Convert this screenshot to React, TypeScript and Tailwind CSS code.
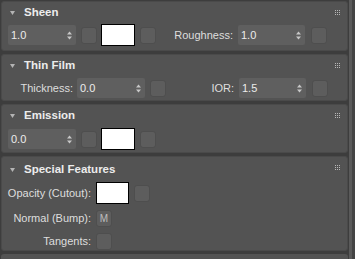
const font = { fontFamily: '"Liberation Sans", Arial, sans-serif' };

function Grip() {
  return (
    <svg width="7" height="7" viewBox="0 0 7 7" className="absolute right-[6px] top-[7px]">
      {[0, 1, 2].map((r) =>
        [0, 1, 2].map((c) => (
          <rect key={`${r}-${c}`} x={c * 2 + 1} y={r * 2 + 1} width="1" height="1" fill="#b8b8b8" />
        ))
      )}
    </svg>
  );
}

function Header({ title, tall }: { title: string; tall?: boolean }) {
  return (
    <div className={`relative flex items-center ${tall ? "h-[24px] pt-[2px]" : "h-[22px]"}`}>
      <svg width="5" height="4" viewBox="0 0 5 4" className="ml-[8px] mr-[9px]">
        <path d="M0 0 H5 L2.5 4 Z" fill="#b4b4b4" />
      </svg>
      <span className="text-[11.5px] font-bold text-[#ececec]">{title}</span>
      <Grip />
    </div>
  );
}

function Spinner({ value, w = "w-[68px]" }: { value: string; w?: string }) {
  return (
    <div className={`flex h-[20px] ${w} items-center justify-between rounded-[2px] bg-[#5f5f5f] pl-[3px] pr-[4px]`}>
      <span className="text-[11px] text-[#ececec]">{value}</span>
      <svg width="5" height="9" viewBox="0 0 5 9">
        <path d="M0 3.5 L2.5 0.5 L5 3.5 Z" fill="#c8c8c8" />
        <path d="M0 5.5 L2.5 8.5 L5 5.5 Z" fill="#c8c8c8" />
      </svg>
    </div>
  );
}

function Square({ children }: { children?: React.ReactNode }) {
  return (
    <div className="flex h-[17px] w-[16px] items-center justify-center rounded-[3px] border border-[#4e4e4e] bg-[#5d5d5d] text-[10px] text-[#bdbdbd]">
      {children}
    </div>
  );
}

function Swatch({ w = "w-[34px]" }: { w?: string }) {
  return <div className={`h-[22px] ${w} border border-black bg-white`} />;
}

function Panel({
  title,
  children,
  className,
  tall,
}: {
  title: string;
  children: React.ReactNode;
  className: string;
  tall?: boolean;
}) {
  return (
    <div className={`relative rounded-[3px] border border-[#4a4a4a] bg-[#535353] ${className}`}>
      <Header title={title} tall={tall} />
      {children}
    </div>
  );
}

export default function App() {
  return (
    <div className="flex h-[259px] w-[355px] overflow-hidden bg-[#3d3d3d]" style={font}>
      <div className="flex w-[348px] flex-col gap-[3px] pl-[1px] pt-[1px] text-[11px] text-[#dedede]">
        <Panel title="Sheen" className="h-[50px] shrink-0">
          <div className="flex h-[22px] items-center pl-[6px]">
            <Spinner value="1.0" />
            <div className="ml-[5px]"><Square /></div>
            <div className="ml-[4px]"><Swatch /></div>
            <div className="ml-[5px]"><Square /></div>
            <span className="ml-[9px] w-[68px] text-right">Roughness:</span>
            <div className="ml-[5px]"><Spinner value="1.0" w="w-[67px]" /></div>
            <div className="ml-[6px]"><Square /></div>
          </div>
        </Panel>
        <Panel title="Thin Film" className="h-[47px] shrink-0">
          <div className="flex h-[22px] items-center pl-[6px]">
            <span className="w-[65px] text-right">Thickness:</span>
            <div className="ml-[4px]"><Spinner value="0.0" /></div>
            <div className="ml-[5px]"><Square /></div>
            <span className="w-[68px] text-right">IOR:</span>
            <div className="ml-[5px]"><Spinner value="1.5" w="w-[67px]" /></div>
            <div className="ml-[6px]"><Square /></div>
          </div>
        </Panel>
        <Panel title="Emission" className="h-[49px] shrink-0">
          <div className="mt-[1px] flex h-[22px] items-center pl-[6px]">
            <Spinner value="0.0" />
            <div className="ml-[5px]"><Square /></div>
            <div className="ml-[4px]"><Swatch /></div>
            <div className="ml-[5px]"><Square /></div>
          </div>
        </Panel>
        <Panel title="Special Features" className="h-[95px] shrink-0" tall>
          <div className="flex flex-col gap-[6px] pl-[4px] pt-[1px]">
            <div className="flex h-[22px] items-center">
              <span className="w-[85px] text-right">Opacity (Cutout):</span>
              <div className="ml-[5px]"><Swatch w="w-[33px]" /></div>
              <div className="ml-[5px]"><Square /></div>
            </div>
            <div className="flex h-[17px] items-center">
              <span className="w-[85px] text-right">Normal (Bump):</span>
              <div className="ml-[5px]"><Square>M</Square></div>
            </div>
            <div className="flex h-[17px] items-center">
              <span className="w-[85px] text-right">Tangents:</span>
              <div className="ml-[5px]"><Square /></div>
            </div>
          </div>
        </Panel>
        <div className="h-[10px] shrink-0 rounded-[3px] bg-[#535353]" />
      </div>
      <div className="ml-[1px] w-[3px] bg-[#5a5a5a]" />
      <div className="w-[3px] bg-[#444444]" />
    </div>
  );
}
